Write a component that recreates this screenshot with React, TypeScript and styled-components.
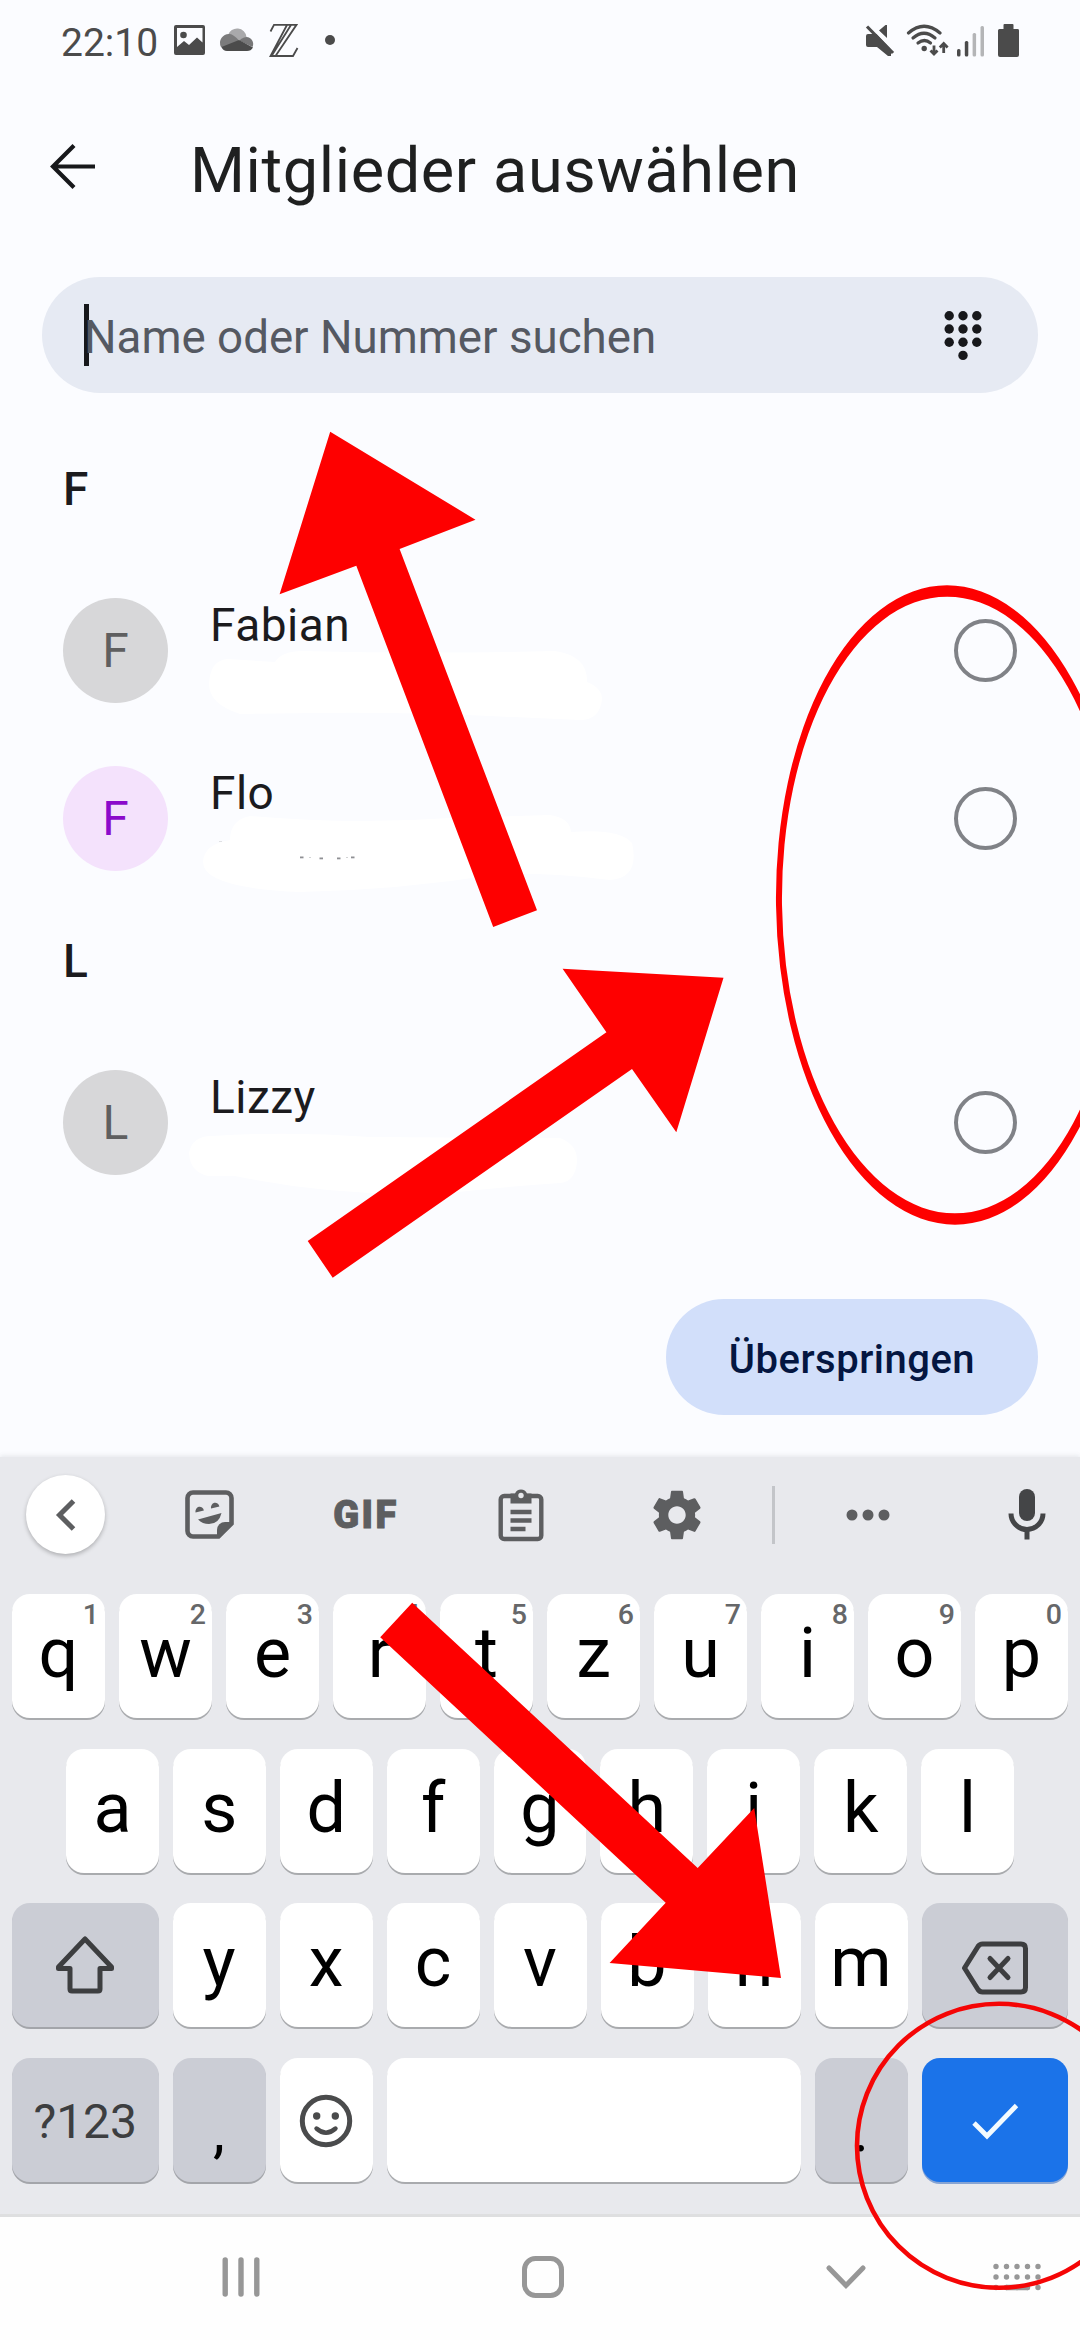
import React from "react";
import styled, { createGlobalStyle } from "styled-components";

const GlobalStyle = createGlobalStyle`
  html, body { margin: 0; padding: 0; background: #fbfcff; }
  *, *::before, *::after { box-sizing: border-box; }
  svg { display: block; flex: none; }
  button { font: inherit; border: 0; margin: 0; padding: 0; }
`;

const Screen = styled.div`
  position: relative;
  width: 1080px;
  height: 2340px;
  overflow: hidden;
  display: flex;
  flex-direction: column;
  background: #fbfcff;
  color: #1b1b1e;
  font-family: Roboto, "Noto Sans", sans-serif;
`;

const StatusBar = styled.header`
  height: 80px;
  flex: none;
  display: flex;
  align-items: flex-start;
  justify-content: space-between;
  padding: 19px 61px 0 61px;
`;

const StatusGroup = styled.div<{ $gap: number }>`
  display: flex;
  align-items: center;
  height: 44px;
  gap: ${(p) => p.$gap}px;
`;

const Clock = styled.span`
  width: 99px;
  padding-top: 4px;
  font-size: 39px;
  line-height: 44px;
  color: #4b4b4b;
`;

const TitleBar = styled.div`
  height: 197px;
  flex: none;
  display: flex;
  align-items: flex-start;
  padding-left: 49px;
`;

const BackIcon = styled.svg`
  margin-top: 63px;
  width: 48px;
  height: 48px;
`;

const Title = styled.h1`
  margin: 51px 0 0 93px;
  font-size: 63px;
  line-height: 80px;
  font-weight: 400;
  letter-spacing: 0.62px;
  color: #1f2020;
`;

const SearchField = styled.div`
  height: 116px;
  flex: none;
  margin: 0 42px;
  padding: 0 56px 0 42px;
  border-radius: 58px;
  background: #e6eaf3;
  display: flex;
  align-items: center;
  justify-content: space-between;
`;

const Caret = styled.span`
  width: 5px;
  height: 62px;
  margin-right: -5px;
  background: #17181b;
`;

const Placeholder = styled.span`
  flex: 1;
  font-size: 45.7px;
  line-height: 62px;
  padding-top: 6px;
  color: #555962;
`;

const ContactList = styled.main`
  height: 906px;
  flex: none;
  padding: 64px 63px 0;
`;

const SectionLetter = styled.h2<{ $following?: boolean }>`
  margin: 0;
  height: ${(p) => (p.$following ? 136 : 109.5)}px;
  padding-top: ${(p) => (p.$following ? 26 : 0)}px;
  font-size: 46px;
  line-height: 64px;
  font-weight: 500;
`;

const ContactRow = styled.div`
  height: 168px;
  display: flex;
  align-items: center;
`;

const Avatar = styled.div<{ $bg: string; $fg: string }>`
  width: 105px;
  height: 105px;
  border-radius: 50%;
  display: flex;
  align-items: center;
  justify-content: center;
  font-size: 48px;
  line-height: 60px;
  font-weight: 450;
  background: ${(p) => p.$bg};
  color: ${(p) => p.$fg};
`;

const ContactName = styled.div`
  flex: 1;
  height: 105px;
  padding-left: 42px;
  font-size: 46px;
  line-height: 54px;
  letter-spacing: 0.5px;
`;

const Radio = styled.span`
  width: 63px;
  height: 63px;
  border: 4px solid #808287;
  border-radius: 50%;
`;

const ActionRow = styled.div`
  flex: none;
  height: 158px;
  display: flex;
  justify-content: flex-end;
  align-items: flex-start;
  padding-right: 42px;
`;

const SkipButton = styled.button`
  width: 372px;
  height: 116px;
  border-radius: 58px;
  background: #d2dffa;
  color: #041641;
  font-size: 40px;
  line-height: 56px;
  padding-top: 6px;
  font-weight: 500;
  letter-spacing: 0.5px;
`;

const Keyboard = styled.section`
  flex: none;
  height: 757px;
  background: #e8e9ed;
  box-shadow: 0 -1px 5px rgba(60, 64, 70, 0.12);
`;

const Toolbar = styled.div`
  height: 137px;
  padding-bottom: 22px;
  display: grid;
  grid-template-columns: 131px 156px 156px 156px 156px 36px 154px 135px;
  align-items: center;
  justify-items: center;
`;

const CollapseButton = styled.button`
  width: 79px;
  height: 79px;
  border-radius: 50%;
  background: #fff;
  display: flex;
  align-items: center;
  justify-content: center;
  box-shadow: 0 2px 4px rgba(0, 0, 0, 0.25);
`;

const GifLabel = styled.span`
  font-size: 38px;
  line-height: 44px;
  font-weight: 900;
  letter-spacing: 2.5px;
  padding-left: 2px;
  color: #5d5e60;
  -webkit-text-stroke: 1px #5d5e60;
`;

const Divider = styled.span`
  width: 3px;
  height: 58px;
  background: #c3c5c9;
`;

const MicIcon = styled.svg`
  justify-self: start;
  margin-left: 63px;
`;

const KeyRows = styled.div`
  display: flex;
  flex-direction: column;
  gap: 30.7px;
`;

const KeyRow = styled.div<{ $inset?: number }>`
  display: flex;
  gap: 14px;
  padding: 0 ${(p) => p.$inset ?? 12}px;
`;

const tones = {
  light: { bg: "#ffffff", fg: "#000000", edge: "#a9abae" },
  dark: { bg: "#cbcdd5", fg: "#3d3e40", edge: "#a3a5aa" },
  accent: { bg: "#1b73e9", fg: "#ffffff", edge: "#86a4d4" },
};

const Key = styled.button<{ $tone?: keyof typeof tones; $grow?: number; $size?: number; $weight?: number; $drop?: number; $lift?: number }>`
  position: relative;
  flex: ${(p) => p.$grow ?? 93} 1 0;
  height: 124px;
  border-radius: 18px;
  display: flex;
  align-items: center;
  justify-content: center;
  padding-top: ${(p) => p.$drop ?? 0}px;
  padding-bottom: ${(p) => p.$lift ?? 0}px;
  background: ${(p) => tones[p.$tone ?? "light"].bg};
  color: ${(p) => tones[p.$tone ?? "light"].fg};
  box-shadow: 0 2px 0 ${(p) => tones[p.$tone ?? "light"].edge};
  font-size: ${(p) => p.$size ?? 70}px;
  line-height: 80px;
  font-weight: ${(p) => p.$weight ?? 400};
`;

const Punctuation = styled.span`
  color: #000;
`;

const KeyHint = styled.span`
  position: absolute;
  top: 4px;
  right: 6px;
  font-size: 28.5px;
  line-height: 34px;
  font-weight: 500;
  color: #666769;
`;

const NavBar = styled.nav`
  height: 126px;
  flex: none;
  border-top: 3px solid #dedfe0;
  background: #fefefe;
  display: grid;
  grid-template-columns: 302px 302px 304px 38px;
  padding: 0 0 4px 90px;
  align-items: center;
  justify-items: center;
`;

const NavItem = styled.span`
  display: flex;
  justify-content: center;
  width: 0;
`;

const Annotations = styled.svg`
  position: absolute;
  inset: 0;
  pointer-events: none;
`;

const contacts = {
  F: [
    { name: "Fabian", bg: "#d7d7d9", fg: "#5f5f60" },
    { name: "Flo", bg: "#f4e2fc", fg: "#8b0acb" },
  ],
  L: [{ name: "Lizzy", bg: "#d7d7d9", fg: "#5f5f60" }],
};

function Contact({ name, bg, fg }: { name: string; bg: string; fg: string }) {
  return (
    <ContactRow>
      <Avatar $bg={bg} $fg={fg}>{name[0]}</Avatar>
      <ContactName>{name}</ContactName>
      <Radio />
    </ContactRow>
  );
}

function StatusIcons() {
  return (
    <svg width="154" height="36" viewBox="865 23 154 36" fill="#4b4b4b">
      <path d="M868 34h8.500l14.500 15.500v6.500h-3l-11-9h-9a2 2 0 0 1-2-2v-9a2 2 0 0 1 2-2z" />
      <path d="M887 25v13l-8-7.500 6.500-5.500z" />
      <path d="M865.500 24.500l31 30" stroke="#fbfcff" strokeWidth="3" transform="translate(2.500 -2)" />
      <path d="M867 26.500l26 26.500" stroke="#4b4b4b" strokeWidth="3.200" />
      <g fill="none" stroke="#4b4b4b" strokeWidth="3.200" strokeLinecap="round">
        <path d="M908.500 33q15.500-13.500 31.500 0" />
        <path d="M913 38q11-9.500 22 0" />
        <path d="M918 43q6.500-5 12.500 0" />
      </g>
      <circle cx="924.200" cy="48.500" r="2.700" />
      <g fill="none" stroke="#4b4b4b" strokeWidth="2.800">
        <path d="M934 45.500v8.500M930.500 50.500l3.500 3.500 3.500-3.500" />
        <path d="M943.700 53v-9M939.800 47.500l3.900-3.900 3.900 3.900" />
      </g>
      <rect x="957" y="49" width="3.500" height="7.500" rx="1.500" />
      <rect x="964.800" y="41" width="3.500" height="15.500" rx="1.500" />
      <rect x="972.600" y="33" width="3.500" height="23.500" rx="1.500" fill="#b4b5b7" />
      <rect x="980.500" y="26" width="3.500" height="30.500" rx="1.500" fill="#b4b5b7" />
      <path d="M1004.500 24h8a1 1 0 0 1 1 1v4h4a1.500 1.500 0 0 1 1.500 1.500v24.500a2 2 0 0 1-2 2h-17a2 2 0 0 1-2-2v-24.500a1.500 1.500 0 0 1 1.500-1.500h4v-4a1 1 0 0 1 1-1z" />
    </svg>
  );
}

function NotificationIcons() {
  return (
    <svg width="162" height="36" viewBox="174 23 162 36" fill="#4b4b4b">
      <path fillRule="evenodd" d="M176 25h27a2 2 0 0 1 2 2v26a2 2 0 0 1-2 2h-27a2 2 0 0 1-2-2v-26a2 2 0 0 1 2-2zm1 3v19l7-6 5 4 8-7.500 5.500 5v-14.500z" />
      <circle cx="183.500" cy="35" r="3.300" />
      <path d="M228 35a9.500 9.500 0 0 1 18.500 2l-9 4z" fill="#a9a9ab" />
      <path d="M221 47a9 9 0 0 1 9-13q3 0 9 6.500l-15 8z" fill="#7b7b7c" />
      <path d="M239 40.500q4-3.500 7.500-3.500a7 7 0 0 1 6 10z" fill="#777778" />
      <path d="M221.500 47l17.500-7 14 7.500q-2 3.500-6 3.500h-20q-4 0-5.500-4z" />
      <g fill="none" stroke="#4b4b4b" strokeWidth="1.800">
        <path d="M270.500 31.500l3.500-6.700h22.500l-21 31.200M287 25l-16.500 31h22.500l4.500-8M291 25l-19.500 31" />
      </g>
      <circle cx="330" cy="40" r="5" />
    </svg>
  );
}

function DialpadIcon() {
  const dots = [0, 1, 2].flatMap((r) => [0, 1, 2].map((c) => [c, r])).concat([[1, 3]]);
  return (
    <svg width="38" height="52" viewBox="0 0 38 52" fill="#17181b">
      {dots.map(([c, r]) => <circle key={`${c}${r}`} cx={5.2 + c * 13.8} cy={6.8 + r * 13.200} r="4.700" />)}
    </svg>
  );
}

function KeyboardToolbar() {
  return (
    <Toolbar>
      <CollapseButton>
        <svg width="24" height="34" viewBox="0 0 24 34" fill="none" stroke="#5d5e60" strokeWidth="5">
          <path d="M19.500 3l-14 14 14 14" />
        </svg>
      </CollapseButton>
      <svg width="49" height="49" viewBox="0 0 49 49" fill="#5d5e60">
        <path d="M8 2.500h33a5.500 5.500 0 0 1 5.500 5.500v25.500L33.500 46.500H8A5.500 5.500 0 0 1 2.500 41V8A5.500 5.500 0 0 1 8 2.500z" fill="none" stroke="#5d5e60" strokeWidth="4.600" />
        <path d="M32 47v-7a8 8 0 0 1 8-8h7z" />
        <path d="M10.500 22.500a4.200 4.700 0 0 1 8.400-2z" />
        <path d="M26 18.500a4.200 4.700 0 0 1 8.400-2z" />
        <path d="M13 29.500l23.500-6.500q-2.500 11-12.500 11-6.500 0-11-4.500z" />
      </svg>
      <GifLabel>GIF</GifLabel>
      <svg width="46" height="54" viewBox="0 0 46 54" fill="none" stroke="#5d5e60" strokeWidth="4.400">
        <rect x="2.700" y="8" width="40.600" height="43" rx="3.500" />
        <path d="M12.500 15.500V5.500H17a6.500 6.500 0 0 1 12 0h4.500v10z" fill="#5d5e60" stroke="none" />
        <circle cx="23" cy="7.500" r="2.700" fill="#e8e9ed" stroke="none" />
        <path d="M12.500 24h21M12.500 32.500h21M12.500 41h15" />
      </svg>
      <svg width="58" height="58" viewBox="0 0 24 24" fill="#5d5e60">
        <path d="M19.430 12.980c.040-.320.070-.640.070-.980s-.030-.660-.070-.980l2.110-1.650c.190-.150.240-.420.120-.640l-2-3.460c-.120-.220-.390-.300-.610-.220l-2.490 1c-.520-.400-1.080-.730-1.690-.980l-.380-2.650C14.460 2.180 14.250 2 14 2h-4c-.250 0-.460.180-.490.420l-.380 2.650c-.610.250-1.170.590-1.690.980l-2.490-1c-.230-.090-.490 0-.610.220l-2 3.460c-.130.220-.070.490.120.640l2.110 1.650c-.040.320-.070.650-.070.980s.030.660.070.980l-2.110 1.650c-.190.150-.240.420-.120.640l2 3.460c.120.220.390.300.610.220l2.490-1c.520.400 1.080.730 1.690.980l.380 2.650c.030.240.240.420.490.420h4c.250 0 .460-.180.490-.420l.380-2.650c.610-.250 1.170-.590 1.690-.980l2.490 1c.230.090.490 0 .610-.220l2-3.460c.120-.220.070-.490-.120-.640l-2.110-1.650zM12 15.600c-1.980 0-3.600-1.620-3.600-3.600s1.620-3.600 3.600-3.600 3.600 1.620 3.600 3.600-1.620 3.600-3.600 3.600z" />
      </svg>
      <Divider />
      <svg width="44" height="12" viewBox="0 0 44 12" fill="#5d5e60">
        {[6, 22, 38].map((x) => <circle key={x} cx={x} cy="6" r="5.500" />)}
      </svg>
      <MicIcon width="38" height="51" viewBox="0 0 38 51" fill="#444547">
        <rect x="11" y="0" width="16" height="32" rx="8" />
        <path d="M3 24.500a16 16 0 0 0 32 0" fill="none" stroke="#444547" strokeWidth="5" />
        <rect x="16.500" y="40" width="5" height="10.500" />
      </MicIcon>
    </Toolbar>
  );
}

function KeyboardKeys() {
  return (
    <KeyRows>
      <KeyRow>
        {"qwertzuiop".split("").map((k, i) => (
          <Key key={k} $lift={6}>
            {k}
            <KeyHint>{(i + 1) % 10}</KeyHint>
          </Key>
        ))}
      </KeyRow>
      <KeyRow $inset={66}>
        {"asdfghjkl".split("").map((k) => <Key key={k} $lift={6}>{k}</Key>)}
      </KeyRow>
      <KeyRow>
        <Key $tone="dark" $grow={146.500}>
          <svg width="62" height="60" viewBox="0 0 62 60" fill="none" stroke="#3d3e40" strokeWidth="5" strokeLinejoin="round">
            <path d="M31 4L4.500 32v1.500H16V54q0 2 2 2h26q2 0 2-2V33.500h11.500V32z" />
          </svg>
        </Key>
        {"yxcvbnm".split("").map((k) => <Key key={k} $lift={6}>{k}</Key>)}
        <Key $tone="dark" $grow={146.500} $drop={6}>
          <svg width="68" height="54" viewBox="0 0 68 54" fill="none" stroke="#3d3e40" strokeWidth="5" strokeLinejoin="round" strokeLinecap="round">
            <path d="M3.500 27L17 5.500q1.700-2.500 4.500-2.500H60q4.500 0 4.500 4.500v39q0 4.500-4.500 4.500H21.500q-2.800 0-4.500-2.500z" />
            <path d="M29 17.500l18 19M47 17.500l-18 19" />
          </svg>
        </Key>
      </KeyRow>
      <KeyRow>
        <Key $tone="dark" $grow={146.500} $size={48} $weight={450} $drop={4}>?123</Key>
        <Key $tone="dark" $size={60} $drop={21}><Punctuation>,</Punctuation></Key>
        <Key $drop={1}>
          <svg width="54" height="54" viewBox="0 0 54 54" fill="none" stroke="#4a4b4c" strokeWidth="5">
            <circle cx="27" cy="27" r="23.700" />
            <circle cx="17.700" cy="22" r="3.700" fill="#4a4b4c" stroke="none" />
            <circle cx="36.300" cy="22" r="3.700" fill="#4a4b4c" stroke="none" />
            <path d="M17.500 34.500q9.500 8.500 19 0" strokeWidth="4.400" strokeLinecap="round" />
          </svg>
        </Key>
        <Key $grow={414} aria-label="Leertaste" />
        <Key $tone="dark" $size={60} $drop={21}><Punctuation>.</Punctuation></Key>
        <Key $tone="accent" $grow={146.500} $drop={1}>
          <svg width="50" height="38" viewBox="0 0 50 38" fill="none" stroke="#f4fbff" strokeWidth="4.800">
            <path d="M4 21l13 13L46.500 3.500" />
          </svg>
        </Key>
      </KeyRow>
    </KeyRows>
  );
}

function Navigation() {
  return (
    <NavBar>
      <NavItem>
        <svg width="40" height="42" viewBox="0 0 40 42" fill="none" stroke="#979797" strokeWidth="5.400" strokeLinecap="round">
          <path d="M4.200 4v34M20 4v34M35.800 4v34" />
        </svg>
      </NavItem>
      <NavItem>
        <svg width="42" height="42" viewBox="0 0 42 42" fill="none" stroke="#979797" strokeWidth="5">
          <rect x="2.500" y="2.500" width="37" height="37" rx="11" />
        </svg>
      </NavItem>
      <NavItem>
        <svg width="42" height="28" viewBox="0 0 42 28" fill="none" stroke="#979797" strokeWidth="5" strokeLinecap="round">
          <path d="M4 5l17 17.500L38 5" />
        </svg>
      </NavItem>
      <NavItem>
        <svg width="50" height="28" viewBox="0 0 50 28" fill="#979797">
          {[0, 1, 2].map((r) => [0, 1, 2, 3, 4].map((c) => <circle key={`${r}${c}`} cx={4 + c * 10.500} cy={3.500 + r * 10.500} r="2.700" />))}
          <rect x="12" y="21.800" width="26" height="5.400" rx="2.700" />
        </svg>
      </NavItem>
    </NavBar>
  );
}

function Markup() {
  return (
    <Annotations width="1080" height="2340" viewBox="0 0 1080 2340">
      <g fill="#fff">
        <path d="M209 684Q210 660 228 659L275 662Q281 652 300 651Q430 654 555 651Q588 656 587 682Q602 688 602 699Q600 720 580 720L490 716Q400 712 320 713L240 714Q209 704 209 684Z" />
        <path d="M203 862Q204 844 230 840Q230 820 250 816Q350 825 450 818L550 815Q570 818 571 832Q620 828 632 843Q640 878 610 880Q540 872 500 874Q400 890 300 892Q203 888 203 862Z" />
        <path d="M189 1153Q192 1136 212 1136Q290 1131 370 1137Q480 1138 560 1138Q578 1145 577 1162Q575 1182 560 1183Q490 1188 450 1193Q340 1198 235 1176L208 1176Q190 1172 189 1153Z" />
      </g>
      <g fill="#8f9094">
        <rect x="300" y="856.500" width="3.500" height="1.800" />
        <rect x="319.500" y="857.500" width="3.500" height="1.800" />
        <rect x="337" y="857.500" width="3.500" height="1.800" />
        <rect x="351" y="856.500" width="3.500" height="1.800" />
        <rect x="309" y="857" width="2" height="1" opacity="0.400" />
        <rect x="346" y="857" width="2" height="1" opacity="0.400" />
        <rect x="219" y="841" width="3" height="1" opacity="0.250" />
      </g>
      <g fill="#fe0000">
        <path d="M330.200 431.700L475.500 519.700 399.600 549 537 910.300 493.200 927 356.300 565.700 279.600 594.300z" />
        <path d="M307.700 1241L332.700 1277.700 632 1069 676.300 1132.300 723.500 977.700 562.600 968.700 606.400 1032.300z" />
        <path d="M412.200 1602.700L380.200 1637.300 665.700 1902.700 609.600 1963 781 1978 754.200 1808 697.700 1868z" />
        <path
          fillRule="evenodd"
          transform="translate(951 905) skewX(0.720)"
          d="M-175 0A175 319.700 0 1 1 175 0A175 319.700 0 1 1-175 0ZM-169 0A169 308.300 0 1 0 169 0A169 308.300 0 1 0-169 0Z"
        />
      </g>
      <ellipse cx="999" cy="2145.800" rx="142" ry="142" fill="none" stroke="#f50505" strokeWidth="4.600" />
    </Annotations>
  );
}

export default function App() {
  return (
    <>
      <GlobalStyle />
      <Screen>
        <StatusBar>
          <StatusGroup $gap={14}>
            <Clock>22:10</Clock>
            <NotificationIcons />
          </StatusGroup>
          <StatusGroup $gap={0}>
            <StatusIcons />
          </StatusGroup>
        </StatusBar>
        <TitleBar>
          <BackIcon viewBox="0 0 48 48" fill="none" stroke="#17181b" strokeWidth="4.200">
            <path d="M46 23.500H4M25 2.500L4 23.500l21 21" />
          </BackIcon>
          <Title>Mitglieder auswählen</Title>
        </TitleBar>
        <SearchField>
          <Caret />
          <Placeholder>Name oder Nummer suchen</Placeholder>
          <DialpadIcon />
        </SearchField>
        <ContactList>
          <SectionLetter>F</SectionLetter>
          {contacts.F.map((c) => <Contact key={c.name} {...c} />)}
          <SectionLetter $following>L</SectionLetter>
          {contacts.L.map((c) => <Contact key={c.name} {...c} />)}
        </ContactList>
        <ActionRow>
          <SkipButton>Überspringen</SkipButton>
        </ActionRow>
        <Keyboard>
          <KeyboardToolbar />
          <KeyboardKeys />
        </Keyboard>
        <Navigation />
        <Markup />
      </Screen>
    </>
  );
}
